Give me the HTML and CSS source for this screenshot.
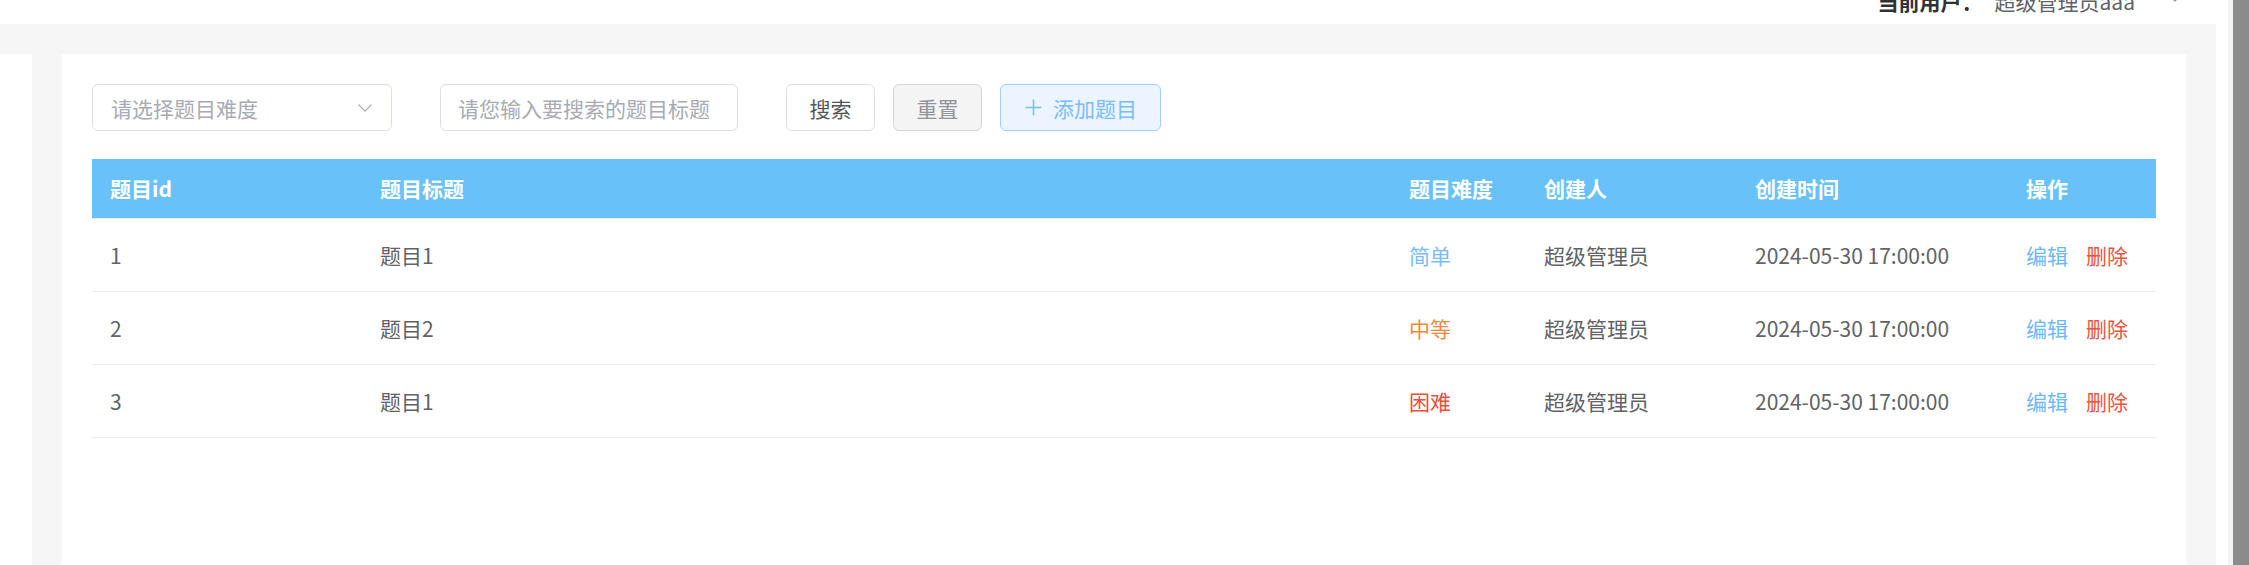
FILE: index.html
```html
<!DOCTYPE html>
<html lang="zh-CN">
<head>
<meta charset="utf-8">
<title>题目管理</title>
<link rel="stylesheet" href="styles.css">
</head>
<body>
<div class="app">
  <div class="main">
    <header class="topbar">
      <div class="user">
        <span class="user-label">当前用户：</span><span class="user-name">超级管理员aaa</span>
        <svg class="user-caret" width="14" height="8" viewBox="0 0 14 8"><polyline points="1,1 7,7 13,1" fill="none" stroke="#909399" stroke-width="1.2"/></svg>
      </div>
    </header>
    <div class="body-row">
      <div class="content">
        <div class="side-strip"></div>
        <section class="card">
          <div class="toolbar">
            <div class="select">
              <span class="placeholder">请选择题目难度</span>
              <svg class="chevron" width="14" height="8" viewBox="0 0 14 8"><polyline points="0.5,0.5 7,7.2 13.5,0.5" fill="none" stroke="#a8abb2" stroke-width="1.1"/></svg>
            </div>
            <div class="input"><span class="placeholder">请您输入要搜索的题目标题</span></div>
            <button class="btn btn-search">搜索</button>
            <button class="btn btn-reset">重置</button>
            <button class="btn btn-add">
              <svg class="plus" width="17" height="17" viewBox="0 0 17 17"><path d="M8.5 0.5V16.5M0.5 8.5H16.5" fill="none" stroke="#79bbff" stroke-width="1.5"/></svg>
              <span>添加题目</span>
            </button>
          </div>
          <table class="grid">
            <colgroup>
              <col class="c-id"><col class="c-title"><col class="c-diff"><col class="c-user"><col class="c-time"><col class="c-op">
            </colgroup>
            <thead>
              <tr><th>题目id</th><th>题目标题</th><th>题目难度</th><th>创建人</th><th>创建时间</th><th>操作</th></tr>
            </thead>
            <tbody>
              <tr>
                <td>1</td><td>题目1</td><td class="easy">简单</td><td>超级管理员</td><td>2024-05-30 17:00:00</td>
                <td><span class="op-edit">编辑</span><span class="op-del">删除</span></td>
              </tr>
              <tr>
                <td>2</td><td>题目2</td><td class="mid">中等</td><td>超级管理员</td><td>2024-05-30 17:00:00</td>
                <td><span class="op-edit">编辑</span><span class="op-del">删除</span></td>
              </tr>
              <tr>
                <td>3</td><td>题目1</td><td class="hard">困难</td><td>超级管理员</td><td>2024-05-30 17:00:00</td>
                <td><span class="op-edit">编辑</span><span class="op-del">删除</span></td>
              </tr>
            </tbody>
          </table>
        </section>
      </div>
      <div class="right-strip"></div>
    </div>
  </div>
  <div class="scrollbar"></div>
</div>
</body>
</html>
```

FILE: styles.css
```css
* { box-sizing: border-box; }
html, body {
  margin: 0;
  padding: 0;
  width: 2249px;
  height: 565px;
  overflow: hidden;
  background: #ffffff;
  font-family: "Noto Sans CJK SC", "Noto Sans", sans-serif;
  font-size: 21px;
  color: #606266;
}
.app {
  display: flex;
  width: 2249px;
  height: 565px;
}
.main {
  flex: 1;
  display: flex;
  flex-direction: column;
  min-width: 0;
}
.scrollbar {
  width: 16px;
  height: 565px;
  background: #8b8b8b;
  border-left: 5px solid #f3f3f3;
  box-sizing: content-box;
}
.topbar {
  height: 24px;
  background: #ffffff;
  overflow: hidden;
  display: flex;
  justify-content: flex-end;
  padding-right: 46px;
}
.user {
  display: flex;
  align-items: flex-start;
  margin-top: -9px;
  line-height: 21px;
  height: 21px;
}
.user-label {
  font-weight: 700;
  color: #303133;
  margin-right: 12px;
}
.user-name {
  color: #606266;
}
.user-caret {
  margin-left: 33px;
  margin-top: 3px;
}
.body-row {
  flex: 1;
  display: flex;
  min-height: 0;
}
.content {
  width: 2216px;
  background: #f6f6f6;
  padding: 30px 30px 0 0;
  display: flex;
  gap: 30px;
}
.side-strip {
  width: 32px;
  background: #ffffff;
}
.right-strip {
  flex: 1;
  background: #ffffff;
}
.card {
  flex: 1;
  background: #ffffff;
  padding: 30px;
}
.toolbar {
  display: flex;
  align-items: center;
  height: 47px;
}
.select, .input {
  height: 47px;
  border: 1px solid #dcdfe6;
  border-radius: 6px;
  display: flex;
  align-items: center;
  background: #fff;
}
.select {
  width: 300px;
  padding: 0 19px 0 18px;
  justify-content: space-between;
  margin-right: 48px;
}
.input {
  width: 298px;
  padding: 0 17px;
  margin-right: 48px;
}
.placeholder {
  color: #a8abb2;
  white-space: nowrap;
}
.btn {
  height: 47px;
  border-radius: 6px;
  font-family: inherit;
  font-size: 21px;
  padding: 0;
  display: flex;
  align-items: center;
  justify-content: center;
  margin-right: 18px;
}
.btn-search {
  width: 89px;
  background: #ffffff;
  border: 1px solid #dcdfe6;
  color: #555659;
}
.btn-reset {
  width: 89px;
  background: #f4f4f5;
  border: 1px solid #d3d4d6;
  color: #909399;
}
.btn-add {
  width: 161px;
  background: #ecf5ff;
  border: 1px solid #a0cfff;
  color: #79bbff;
  gap: 11px;
  padding-left: 1px;
}
.grid {
  margin-top: 28px;
  width: 2064px;
  border-collapse: collapse;
  table-layout: fixed;
}
.c-id { width: 270px; }
.c-title { width: 1029px; }
.c-diff { width: 135px; }
.c-user { width: 211px; }
.c-time { width: 271px; }
.c-op { width: 148px; }
.grid th {
  background: #68c1f8;
  color: #ffffff;
  font-weight: 700;
  text-align: left;
  height: 59px;
  padding: 0 18px;
  border-bottom: 1px solid #ebeef5;
  white-space: nowrap;
}
.grid td {
  height: 73px;
  padding: 0 18px;
  border-bottom: 1px solid #ebeef5;
  color: #606266;
  white-space: nowrap;
}
.grid td.easy { color: #79bbff; }
.grid td.mid { color: #ef8a3a; }
.grid td.hard { color: #ea4f3c; }
.op-edit {
  color: #6fb8f5;
  margin-right: 18px;
}
.op-del {
  color: #e5553f;
}
```
